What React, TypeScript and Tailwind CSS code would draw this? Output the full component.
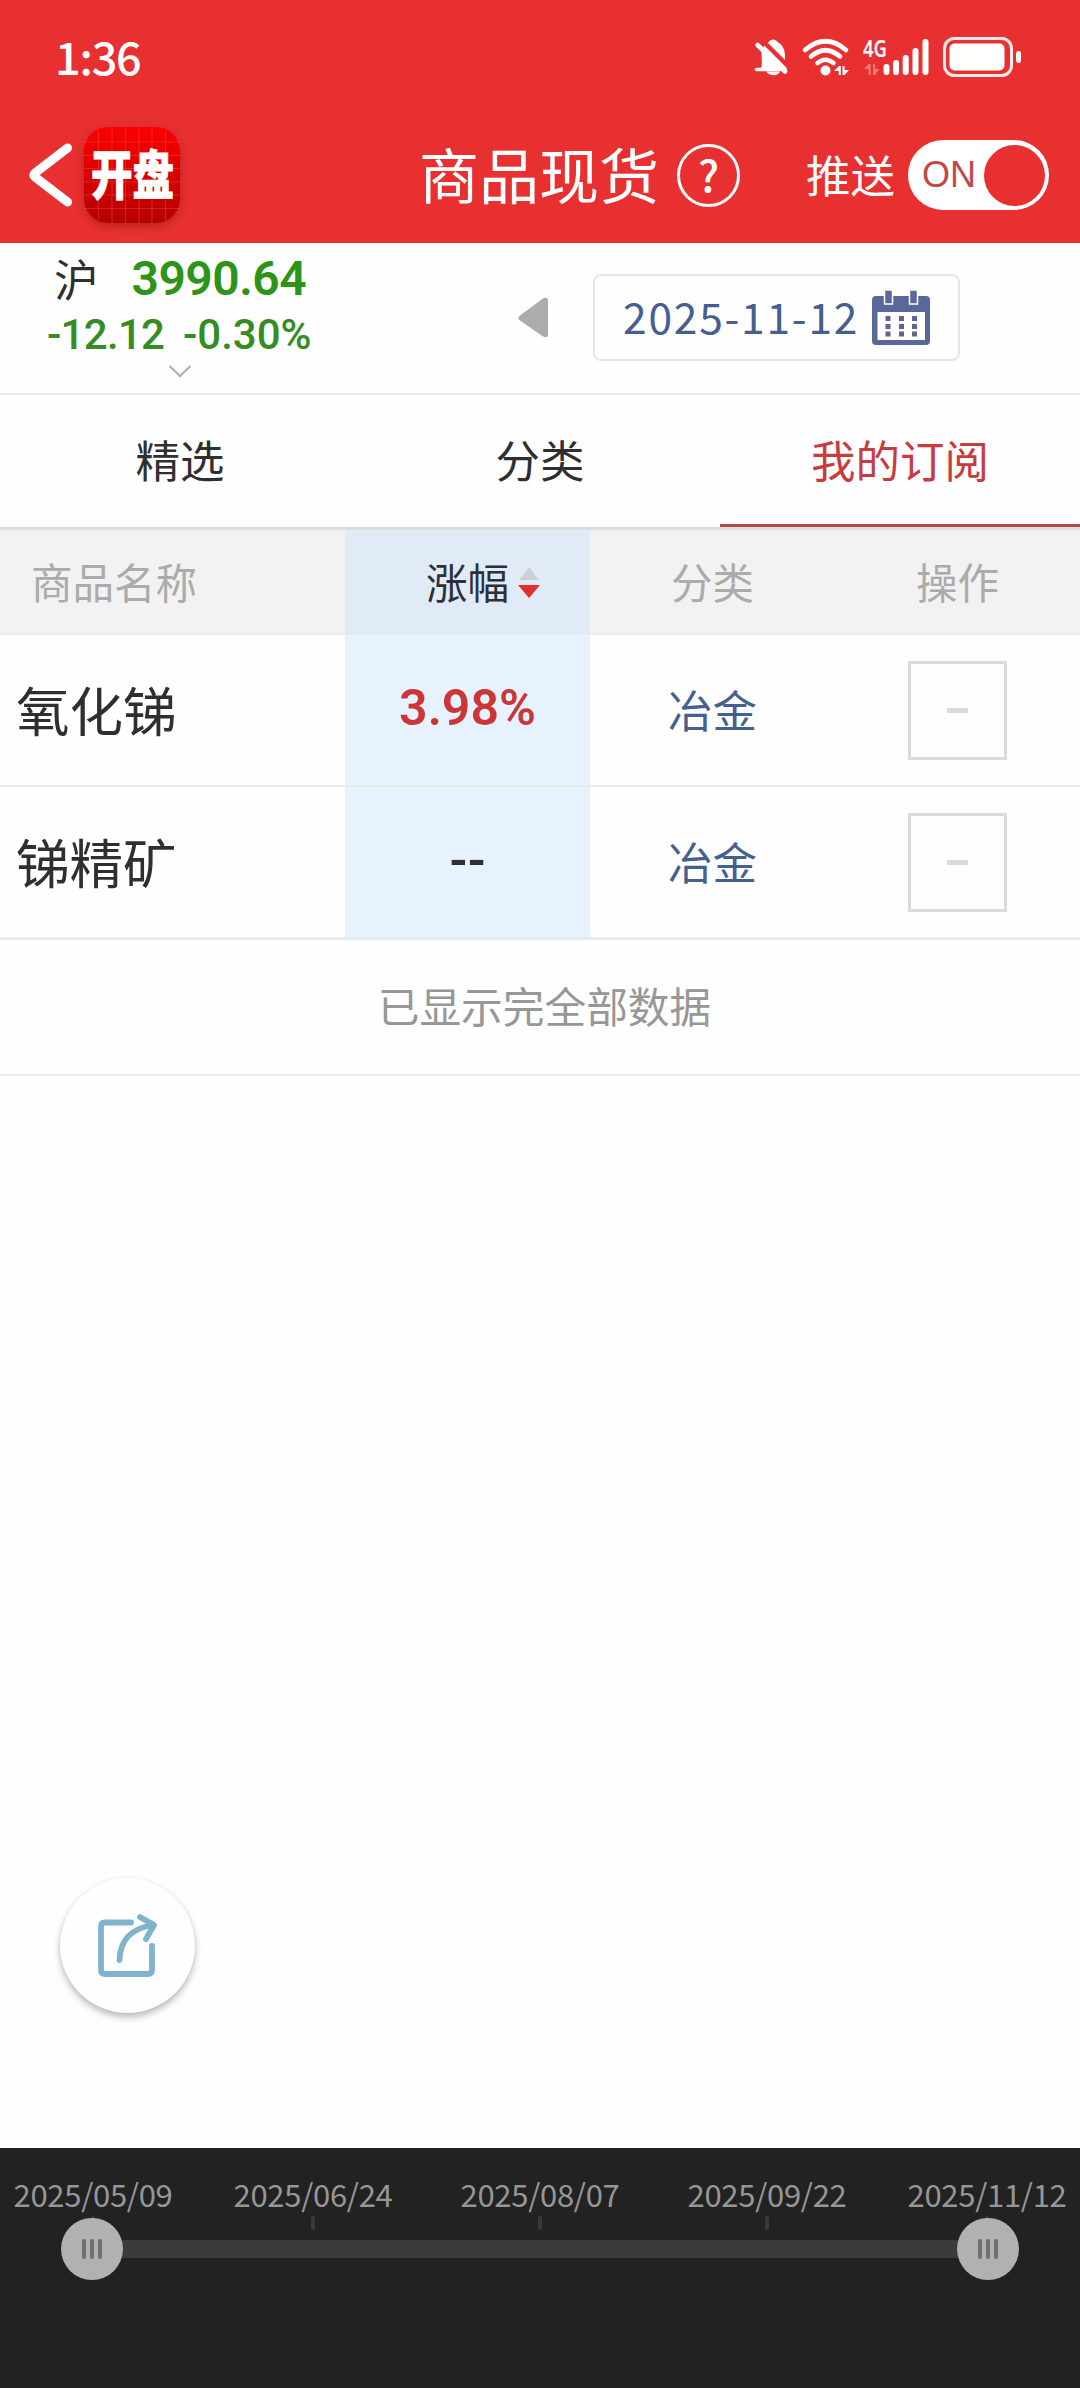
import React from "react";

const tabs = [
  { label: "精选", active: false },
  { label: "分类", active: false },
  { label: "我的订阅", active: true },
];

const rows = [
  { name: "氧化锑", change: "3.98%", up: true, category: "冶金" },
  { name: "锑精矿", change: "--", up: false, category: "冶金" },
];

const dates = ["2025/05/09", "2025/06/24", "2025/08/07", "2025/09/22", "2025/11/12"];

function StatusIcons() {
  return (
    <svg width="270" height="59" viewBox="753 20 270 59" fill="none" className="block">
      {/* muted bell */}
      <path d="M760 69.500 C763 66 761.500 60 761.500 52 C762.500 46 767 43 769 42 C770 38.500 776 38.500 777.500 42 C783 45 785 50 785 56 L785 62 L787 69.500 Z" fill="#fff" />
      <path d="M766 71.500 h14 c-2 5 -10 5 -14 0z" fill="#fff" />
      <path d="M762 40 L790 68" stroke="#e93030" strokeWidth="4.500" />
      <path d="M757.500 45 L785 71.500" stroke="#fff" strokeWidth="4.600" strokeLinecap="round" />
      <path d="M756.500 69.500 H780" stroke="#fff" strokeWidth="3.500" strokeLinecap="round" />
      {/* wifi */}
      <g stroke="#fff" strokeWidth="4.600" strokeLinecap="round">
        <path d="M805 50 Q825.500 32.500 846 50" />
        <path d="M811 56.500 Q825.500 44 840 56.500" />
        <path d="M817.500 63 Q825.500 56.500 833.500 63" />
      </g>
      <circle cx="825.500" cy="70.500" r="5" fill="#fff" />
      <path d="M834 71 l5 -5 h1.800 v9 h-2 v-4z M842.500 66 h2 v4 h4.500 l-4.500 5 h-2z" fill="#fff" />
      {/* mobile data */}
      <path d="M864 69 l4.500 -5 h2.200 v11 h-2.200 v-6z M873 64 h2.200 v5 h4 l-4 6 h-2.200z" fill="#fff" opacity=".35" />
      <g stroke="#fff" strokeWidth="6" strokeLinecap="round">
        <path d="M886.500 67v5M896 63v9M905.700 58v14M915.500 51v21M925.500 42v30" />
      </g>
      <rect x="944.500" y="38.500" width="67" height="37" rx="10" stroke="#fff" strokeOpacity=".9" strokeWidth="3" />
      <rect x="949.500" y="43.500" width="55" height="27" rx="5" fill="#fff" />
      <rect x="1016" y="51" width="5" height="12" rx="2.500" fill="#fff" />
      <g transform="translate(863 56.500) scale(.8 1)">
        <text x="0" y="0" fill="#fff" fontSize="23" fontWeight="600" fontFamily="Noto Sans, sans-serif">4G</text>
      </g>
    </svg>
  );
}

function AppLogo() {
  return (
    <div className="ml-[12px] flex h-[96px] w-[96px] items-center justify-center rounded-[24px] bg-linear-to-b from-[#fb0000] to-[#b60000] shadow-[0_3px_10px_rgba(120,20,20,0.45)]">
      <svg width="96" height="96" viewBox="0 0 96 96">
        <path d="M14.500 3V93M28 0V96M41.500 0V96M55 0V96M68 0V96M81.500 3V93M0 15H96M0 28.500H96M0 41.500H96M0 55H96M0 68H96M0 81.500H96" stroke="#ff7a60" strokeOpacity=".28" strokeWidth="1.200" />
        <g transform="translate(7 67.500) scale(.785 1)">
          <text x="0" y="0" fill="#fff" stroke="#fff" strokeWidth=".8" fontSize="53" fontWeight="900" fontFamily="Noto Sans CJK SC, sans-serif">开盘</text>
        </g>
      </svg>
    </div>
  );
}

function CalendarIcon() {
  return (
    <svg width="58" height="56" viewBox="0 0 58 56" className="block shrink-0">
      <rect x="0" y="6" width="58" height="49" rx="4" fill="#59679a" />
      <rect x="5.500" y="22" width="47.500" height="28" fill="#fff" />
      <path d="M12.500 0h8v14h-8z M37.500 0h8v14h-8z" fill="#59679a" stroke="#fff" strokeWidth="1.500" />
      <g fill="#62648f">
        <path d="M13.500 26h5v5h-5z M27 26h5v5h-5z M40 26h5v5h-5z M13.500 34h5v5h-5z M27 34h5v5h-5z M40 34h5v5h-5z M13.500 41.500h5v5h-5z M27 41.500h5v5h-5z M40 41.500h5v5h-5z" />
      </g>
    </svg>
  );
}

function Grip() {
  return (
    <div className="z-10 flex h-[62px] w-[62px] items-center justify-center gap-[4px] rounded-full bg-[#b1b1b1]">
      <i className="h-[20px] w-[4px] rounded-full bg-[#6f6f6f]" />
      <i className="h-[20px] w-[4px] rounded-full bg-[#6f6f6f]" />
      <i className="h-[20px] w-[4px] rounded-full bg-[#6f6f6f]" />
    </div>
  );
}

export default function App() {
  return (
    <div className="relative flex h-[2388px] w-[1080px] flex-col overflow-hidden bg-[#fefefe] font-['Noto_Sans_CJK_SC',sans-serif] whitespace-nowrap text-[#2f2f2f]">
      <header className="h-[243px] shrink-0 bg-[#e93030] text-white">
        <div className="flex h-[109px] items-start justify-between pt-[20px] pr-[57px] pl-[55px]">
          <span className="mt-[15px] text-[45px] leading-[42px] font-medium tracking-[-1.200px]">1:36</span>
          <StatusIcons />
        </div>
        <div className="flex h-[134px] items-center pb-[2px] pl-[28px]">
          <svg width="44" height="66" viewBox="0 0 44 66" fill="none">
            <path d="M39.500 6 L7 31 Q4.500 33 7 35 L39.500 60" stroke="#fff" strokeWidth="9" strokeLinecap="round" strokeLinejoin="round" />
          </svg>
          <AppLogo />
          <h1 className="ml-[239px] w-[240px] pb-[4px] text-[60px] leading-[66px] font-normal">商品现货</h1>
          <div className="ml-[18px] flex h-[63px] w-[63px] items-center justify-center rounded-full border-[3px] border-white pb-[3px] text-[43px] leading-none font-medium">?</div>
          <span className="ml-[66px] pb-[2px] text-[44.500px] leading-[50px]">推送</span>
          <div className="ml-[13px] flex h-[70px] w-[141px] items-center justify-end rounded-full bg-white pr-[4px]">
            <span className="mr-[8px] font-['Liberation_Sans',sans-serif] text-[36px] leading-none text-[#c34747]">ON</span>
            <div className="h-[61px] w-[61px] rounded-full bg-[#e93030]" />
          </div>
        </div>
      </header>

      <section className="flex h-[152px] shrink-0 border-b-2 border-[#e9e9e9]">
        <div className="flex w-[360px] flex-col items-center">
          <div className="flex h-[71px] w-full items-center pl-[54px] leading-none">
            <span className="text-[44.500px]">沪</span>
            <span className="ml-[33px] font-['Roboto',sans-serif] text-[48px] font-semibold tracking-[-0.500px] text-[#2b9419]">3990.64</span>
          </div>
          <div className="flex h-[42px] w-full items-center pl-[47px] font-['Roboto',sans-serif] text-[42px] leading-none font-medium text-[#358c22]">
            <span className="w-[136px] tracking-[-0.700px]">-12.12</span>
            <span>-0.30%</span>
          </div>
          <svg width="26" height="16" viewBox="0 0 26 16" fill="none" className="mt-[7px]">
            <path d="M2.500 3 L13 13 L23.500 3" stroke="#b0b0b0" strokeWidth="2" />
          </svg>
        </div>
        <svg width="32" height="42" viewBox="0 0 32 42" className="mt-[54px] ml-[157px] shrink-0">
          <path d="M3 18.500 L26 1.500 Q31 -1 31 4 V37 Q31 42 26 39.500 L3 23.500 Q-.5 21 3 18.500Z" fill="#acacac" />
        </svg>
        <div className="mt-[31px] ml-[44px] flex h-[87px] w-[367px] items-center rounded-[8px] border-2 border-[#e6e6e6] pl-[28px] text-[#465f90]">
          <span className="w-[249px] pb-[3px] text-[42.500px] leading-none tracking-[1.800px]">2025-11-12</span>
          <CalendarIcon />
        </div>
      </section>

      <nav className="grid h-[135px] shrink-0 grid-cols-3 border-b-[3px] border-[#dcdcde]">
        {tabs.map((tab) => (
          <div
            key={tab.label}
            className={
              tab.active
                ? "flex items-center justify-center border-b-[3px] border-[#b24747] text-[44.500px] leading-none text-[#c83c3e]"
                : "flex items-center justify-center pb-[3px] text-[44.500px] leading-none"
            }
          >
            <span className="pb-px">{tab.label}</span>
          </div>
        ))}
      </nav>

      <div className="grid h-[105px] shrink-0 grid-cols-[345px_245px_245px_245px] text-center text-[41.500px] leading-[102px] text-[#ababab]">
        <div className="border-b-2 border-[#ebebeb] bg-[#f2f2f2] pl-[31px] text-left">商品名称</div>
        <div className="flex items-start bg-[#e0ebf7] pl-[81px] text-[#2d3038]">
          <span>涨幅</span>
          <svg width="24" height="34" viewBox="0 0 24 34" className="mt-[36px] ml-[8px]">
            <path d="M12 1 L22 14 H2Z" fill="#cdd0d2" />
            <path d="M1 19 H23 L12 32Z" fill="#e02f2f" />
          </svg>
        </div>
        <div className="border-b-2 border-[#ebebeb] bg-[#f2f2f2]">分类</div>
        <div className="border-b-2 border-[#ebebeb] bg-[#f2f2f2]">操作</div>
      </div>

      {rows.map((row, i) => (
        <div
          key={row.name}
          className={
            i === 0
              ? "grid h-[152px] shrink-0 grid-cols-[345px_245px_245px_245px] border-b-2 border-[#e9ebeb] text-center leading-[147px]"
              : "grid h-[153px] shrink-0 grid-cols-[345px_245px_245px_245px] border-b-[3px] border-[#e9ebeb] text-center leading-[147px]"
          }
        >
          <div className="pl-[16px] text-left text-[53.500px]">{row.name}</div>
          <div className={row.up ? "bg-[#e6f3ff] font-['Roboto',sans-serif] text-[50px] leading-[146px] font-semibold text-[#cd3637]" : "bg-[#e6f3ff] pt-[24px] font-['Roboto',sans-serif] text-[50px] leading-[100px] font-semibold"}>
            {row.change}
          </div>
          <div className="text-[44.500px] text-[#45608e]">{row.category}</div>
          <div className="flex items-center justify-center">
            <div className="flex h-[99px] w-[99px] items-center justify-center border-[3px] border-[#dadcdb]">
              <i className="h-[5px] w-[21px] bg-[#dadcdb]" />
            </div>
          </div>
        </div>
      ))}

      <div className="h-[136px] shrink-0 border-b-2 border-[#ebebeb] pl-[9px] text-center text-[41.700px] leading-[131px] text-[#979797]">已显示完全部数据</div>

      <div className="absolute top-[1878px] left-[60px] flex h-[135px] w-[135px] items-center justify-center rounded-full bg-[#fefefe] shadow-[0_4px_7px_rgba(0,0,0,0.27),0_0_3px_rgba(0,0,0,0.05)]">
        <svg width="64" height="68" viewBox="96 1912 64 68" fill="none" stroke="#80b4ce" strokeWidth="5.800" strokeLinecap="round" strokeLinejoin="round">
          <path d="M131 1922.500 H105 Q101 1922.500 101 1926.500 V1970 Q101 1974 105 1974 H148 Q152 1974 152 1970 V1946" />
          <path d="M119.500 1960 C120 1940 132 1928 153 1925" />
          <path d="M140 1917 L154 1925 L146 1939" />
        </svg>
      </div>

      <footer className="mt-auto h-[240px] shrink-0 bg-[#222222] text-[#969696]">
        <div className="grid grid-cols-[186px_254px_200px_254px_186px] justify-items-center pt-[30px] text-[31px] leading-[32px]">
          {dates.map((d) => (
            <span key={d} className="tracking-[-0.300px]">{d}</span>
          ))}
        </div>
        <div className="mt-[6px] grid h-[14px] grid-cols-[186px_254px_200px_254px_186px] justify-items-center">
          {dates.map((d) => (
            <i key={d} className="h-[14px] w-[4px] rounded-sm bg-[#393939]" />
          ))}
        </div>
        <div className="mx-[61px] -mt-[12px] flex h-[62px] items-center">
          <Grip />
          <div className="-mx-[3px] h-[18px] flex-1 bg-[#3b3b3b]" />
          <Grip />
        </div>
      </footer>
    </div>
  );
}
